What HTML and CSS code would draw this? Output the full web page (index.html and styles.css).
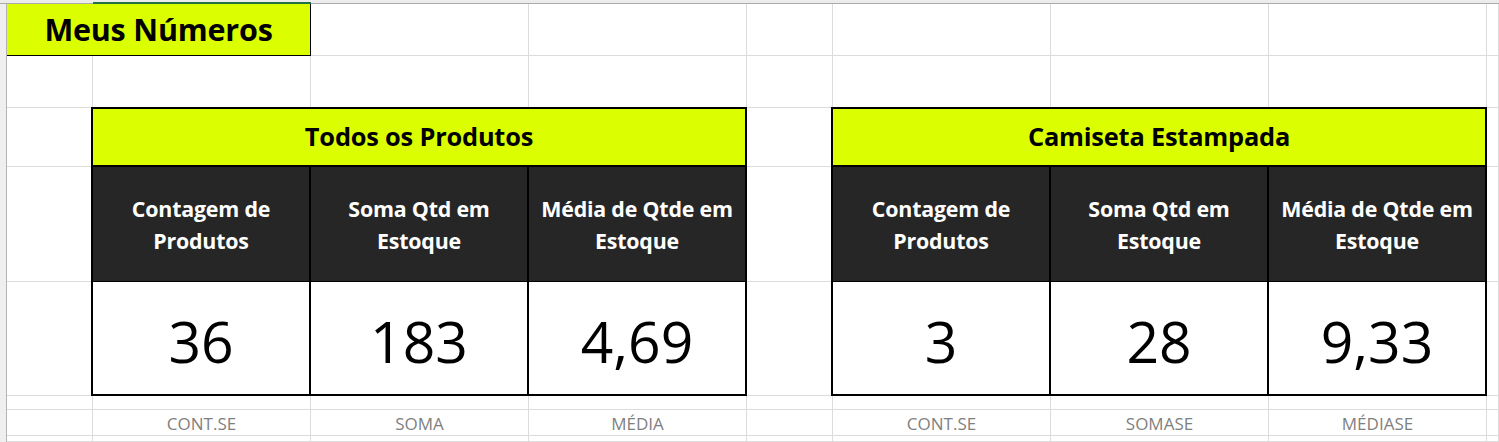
FILE: index.html
```html
<!DOCTYPE html>
<html lang="pt-BR">
<head>
<meta charset="utf-8">
<title>Meus Números</title>
<link rel="stylesheet" href="styles.css">
</head>
<body>
<div class="app">
  <div class="colhead">
    <div class="ch corner"></div>
    <div class="ch"></div>
    <div class="ch sel"></div>
    <div class="ch"></div>
    <div class="ch"></div>
    <div class="ch"></div>
    <div class="ch"></div>
    <div class="ch"></div>
    <div class="ch"></div>
    <div class="ch"></div>
  </div>
  <div class="main">
    <div class="rowhead"></div>
    <div class="sheet">
      <div class="c"></div><div class="c"></div><div class="c"></div><div class="c"></div><div class="c"></div><div class="c"></div><div class="c"></div><div class="c"></div><div class="c"></div><div class="c"></div>
      <div class="c"></div><div class="c"></div><div class="c"></div><div class="c"></div><div class="c"></div><div class="c"></div><div class="c"></div><div class="c"></div><div class="c"></div><div class="c"></div>
      <div class="c"></div><div class="c"></div><div class="c"></div><div class="c"></div><div class="c"></div><div class="c"></div><div class="c"></div><div class="c"></div><div class="c"></div><div class="c"></div>
      <div class="c"></div><div class="c"></div><div class="c"></div><div class="c"></div><div class="c"></div><div class="c"></div><div class="c"></div><div class="c"></div><div class="c"></div><div class="c"></div>
      <div class="c"></div><div class="c"></div><div class="c"></div><div class="c"></div><div class="c"></div><div class="c"></div>

      <div class="title-cell">Meus Números</div>

      <div class="tbl tbl-1">
        <div class="tbl-title">Todos os Produtos</div>
        <div class="th">Contagem de<br>Produtos</div>
        <div class="th">Soma Qtd em<br>Estoque</div>
        <div class="th">Média de Qtde em<br>Estoque</div>
        <div class="td">36</div>
        <div class="td">183</div>
        <div class="td">4,69</div>
      </div>

      <div class="tbl tbl-2">
        <div class="tbl-title">Camiseta Estampada</div>
        <div class="th">Contagem de<br>Produtos</div>
        <div class="th">Soma Qtd em<br>Estoque</div>
        <div class="th">Média de Qtde em<br>Estoque</div>
        <div class="td">3</div>
        <div class="td">28</div>
        <div class="td">9,33</div>
      </div>

      <div class="c lbl l-b">CONT.SE</div>
      <div class="c lbl l-c">SOMA</div>
      <div class="c lbl l-d">MÉDIA</div>
      <div class="c lbl l-f">CONT.SE</div>
      <div class="c lbl l-g">SOMASE</div>
      <div class="c lbl l-h">MÉDIASE</div>
    </div>
  </div>
</div>
</body>
</html>
```
FILE: styles.css
```css
* { box-sizing: border-box; }
html, body { margin: 0; padding: 0; background: #fff; }
body { width: 1499px; height: 442px; overflow: hidden; font-family: "Open Sans", Lato, sans-serif; }

.app { display: flex; flex-direction: column; height: 442px; }

.colhead {
  display: grid;
  grid-template-columns: 7px 86px 218px 218px 218px 86px 218px 218px 218px 1fr;
  height: 4px;
  flex: none;
}
.ch { background: #ececec; border-bottom: 1px solid #ababab; }
.ch.sel { border-bottom: 2px solid #217346; }

.main { display: flex; flex: 1; min-height: 0; }
.rowhead { width: 7px; flex: none; background: #efefef; border-right: 1px solid #b4b4b4; }

.sheet {
  flex: 1;
  display: grid;
  grid-template-columns: 86px 218px 218px 218px 86px 218px 218px 218px 1fr;
  grid-template-rows: 52px 52px 59px 115px 114px 14px 26px 1fr;
}
.c { border-right: 1px solid #dcdcdc; border-bottom: 1px solid #dcdcdc; min-width: 0; }

.title-cell {
  grid-row: 1; grid-column: 1 / 3;
  background: #dcff00;
  border-right: 1px solid #000;
  border-bottom: 1px solid #000;
  display: flex; align-items: center; justify-content: center;
  font-weight: 700; font-size: 30.5px; color: #000;
  letter-spacing: -0.2px;
  padding-bottom: 2px;
}

.tbl {
  z-index: 1;
  grid-row: 3 / 6;
  margin: -1px 0 0 -2px;
  border: 2px solid #000;
  background: #000;
  display: grid;
  grid-template-columns: repeat(3, 1fr);
  grid-template-rows: 58px 115px 1fr;
  column-gap: 2px;
}
.tbl-1 { grid-column: 2 / 5; }
.tbl-2 { grid-column: 6 / 9; }

.tbl-title {
  grid-column: 1 / -1;
  background: #dcff00;
  border-bottom: 2px solid #000;
  display: flex; align-items: center; justify-content: center;
  font-weight: 700; font-size: 25.4px; color: #000;
  letter-spacing: -0.2px;
  padding-bottom: 2px;
}
.th {
  background: #262626;
  border-bottom: 1px solid #000;
  color: #fff;
  font-weight: 700; font-size: 21.4px; line-height: 32px;
  letter-spacing: -0.2px;
  display: flex; align-items: center; justify-content: center;
  text-align: center;
  padding-top: 2px;
}
.td {
  background: #fff;
  color: #000;
  font-size: 57px;
  display: flex; align-items: center; justify-content: center;
  padding-top: 5px;
}

.lbl {
  grid-row: 7;
  display: flex; align-items: center; justify-content: center;
  color: #7f7f7f; font-size: 17px;
  padding-top: 1px;
}
.l-b { grid-column: 2; }
.l-c { grid-column: 3; }
.l-d { grid-column: 4; }
.l-f { grid-column: 6; }
.l-g { grid-column: 7; }
.l-h { grid-column: 8; }
```
